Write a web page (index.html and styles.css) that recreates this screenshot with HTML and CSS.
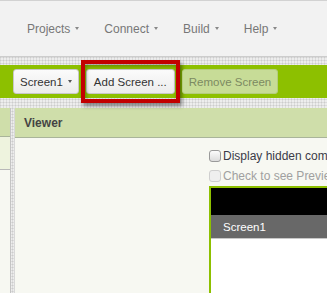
FILE: index.html
```html
<!DOCTYPE html>
<html lang="en">
<head>
    <meta charset="UTF-8">
    <meta name="viewport" content="width=device-width, initial-scale=1.0">
    <title>Viewer</title>
    <link rel="stylesheet" href="styles.css">
</head>
<body>
    <div class="topbar">
        <span class="menu">Projects<i class="caret"></i></span>
        <span class="menu">Connect<i class="caret"></i></span>
        <span class="menu">Build<i class="caret"></i></span>
        <span class="menu">Help<i class="caret"></i></span>
    </div>

    <div class="toolbar">
        <button class="btn">Screen1<i class="caret"></i></button>
        <button class="btn btn-add">Add Screen ...</button>
        <button class="btn btn-disabled" disabled>Remove Screen</button>
    </div>

    <div class="workspace">
        <div class="side">
            <div class="side-head"></div>
            <div class="side-strip"></div>
            <div class="side-box"></div>
        </div>

        <div class="viewer">
            <div class="viewer-head">Viewer</div>
            <div class="viewer-body">
                <label class="check"><span class="box"></span>Display hidden components in Viewer</label>
                <label class="check check-disabled"><span class="box"></span>Check to see Preview on Tablet size.</label>
                <div class="phone">
                    <div class="phone-status"></div>
                    <div class="phone-title">Screen1</div>
                    <div class="phone-screen"></div>
                </div>
            </div>
        </div>
    </div>
</body>
</html>
```

FILE: styles.css
```css
html, body {
    overflow: hidden;
}

body {
    margin: 0;
    font-family: "Liberation Sans", Arial, sans-serif;
    background-color: #ededed;
    /* dotted page texture */
    background-image:
        linear-gradient(90deg, rgba(0, 0, 0, 0.07) 1px, transparent 1px),
        linear-gradient(rgba(0, 0, 0, 0.07) 1px, transparent 1px);
    background-size: 3px 3px;
    height: 293px;
}

.topbar {
    display: flex;
    align-items: center;
    gap: 25px;
    height: 55px;
    padding-left: 27px;
    background: #f2f2f2;
    border-top: 1px solid #d2d2d2;
    border-bottom: 1px solid #cdcdcd;
}

.menu {
    display: flex;
    align-items: center;
    font-size: 12px;
    color: #777;
}

.caret {
    display: inline-block;
    width: 0;
    height: 0;
    margin-left: 5px;
    border-left: 2.5px solid transparent;
    border-right: 2.5px solid transparent;
    border-top: 3px solid #888;
}

.toolbar {
    display: flex;
    align-items: center;
    gap: 7px;
    height: 33px;
    margin-top: 8px;
    padding-left: 13px;
    background: #8dc000;
}

.btn {
    position: relative;
    display: flex;
    align-items: center;
    height: 25px;
    padding: 0 6px;
    font-family: "Liberation Sans", Arial, sans-serif;
    font-size: 11.5px;
    color: #333;
    background: linear-gradient(#fbfbfb, #ececec);
    border: 1px solid #c8c8c8;
    border-radius: 3px;
}

.btn .caret {
    margin-left: 5px;
    border-top-color: #555;
}

.btn-add {
    padding: 0 7px;
}

/* red highlight box drawn over the toolbar */
.btn-add::after {
    content: "";
    position: absolute;
    left: -6px;
    right: -6px;
    top: -10px;
    bottom: -10px;
    border: 4px solid #c20000;
    box-shadow: 2px 3px 4px rgba(0, 0, 0, 0.45), inset 1px 2px 4px rgba(0, 0, 0, 0.35);
}

.btn-disabled {
    background: #c7dc97;
    border-color: #b4cd7e;
    color: #7c8a62;
}

.workspace {
    display: flex;
    gap: 3px;
    margin-top: 10px;
    height: 200px;
}

.side {
    flex: none;
    width: 10px;
    border-right: 1px solid #c4c4c4;
    background: #f3f6ea;
}

.side-head {
    height: 28px;
    background: #cfdeaa;
    border-bottom: 1px solid #a9b49a;
}

.side-strip {
    height: 32px;
    background: #eef3de;
    border-bottom: 1px solid #b8b8b8;
}

.side-box {
    height: 140px;
    background: #f7f8f2;
}

.viewer {
    flex: 1;
    min-width: 0;
    overflow: hidden;
    background: #f7f8f2;
    border-left: 1px solid #d8d8d8;
}

.viewer-head {
    display: flex;
    align-items: center;
    height: 29px;
    padding-left: 9px;
    font-size: 12px;
    font-weight: bold;
    color: #444;
    background: #cfdeaa;
    border-bottom: 1px solid #a9b49a;
}

.viewer-body {
    padding-top: 8px;
    padding-left: 194px;
}

.check {
    display: flex;
    align-items: center;
    height: 20px;
    font-size: 12px;
    color: #3b3b48;
    white-space: nowrap;
}

.box {
    flex: none;
    width: 10px;
    height: 10px;
    margin-right: 2px;
    border: 1px solid #9a9a9a;
    border-radius: 3px;
    background: linear-gradient(#fcfcfc, #dcdcdc);
}

.check-disabled {
    color: #a0a0a0;
}

.check-disabled .box {
    border-color: #cfcfcf;
    background: #efefef;
}

.phone {
    width: 320px;
    border-top: 2px solid #8dc000;
    border-left: 2px solid #8dc000;
}

.phone-status {
    height: 27px;
    background: #000;
}

.phone-title {
    display: flex;
    align-items: center;
    height: 23px;
    padding-left: 12px;
    font-size: 11.5px;
    color: #fff;
    background: #686868;
    border-bottom: 1px solid #c8c8c8;
}

.phone-screen {
    height: 100px;
    background: #fff;
}
```
